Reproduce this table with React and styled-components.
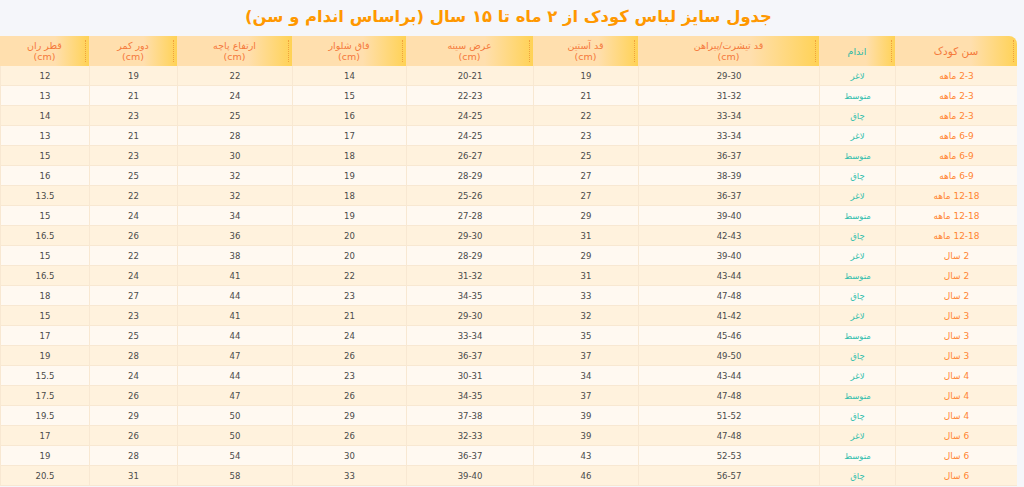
import React from 'react';
import styled, { createGlobalStyle } from 'styled-components';

const GlobalStyle = createGlobalStyle`
  html, body {
    margin: 0;
    padding: 0;
    background: #f5f6fa;
    font-family: "DejaVu Sans", "Noto Sans", sans-serif;
  }
`;

const Page = styled.div`
  direction: rtl;
  padding-right: 7px;
  overflow: hidden;
`;

const Title = styled.h1`
  margin: 0;
  height: 36px;
  line-height: 34px;
  text-align: center;
  font-size: 16.4px;
  font-weight: bold;
  color: #ff9800;
`;

const Table = styled.table`
  width: 100%;
  border-collapse: separate;
  border-spacing: 0;
  table-layout: fixed;
  border-top-right-radius: 8px;
  overflow: hidden;
`;

const Th = styled.th`
  position: relative;
  height: 30px;
  padding: 0 4px;
  font-size: 9.5px;
  font-weight: normal;
  line-height: 11px;
  color: ${(p) => (p.$teal ? '#2bb8a6' : '#f5793b')};
  background: linear-gradient(to right, #ffdfae 0%, #ffdfae 62%, #ffd255 100%);

  &::after {
    content: '';
    position: absolute;
    right: 3px;
    top: 4px;
    bottom: 4px;
    border-right: 1px dotted #f0a23c;
  }

  ${(p) => p.$big && 'font-size: 10.5px;'}
`;

const Row = styled.tr`
  background: ${(p) => (p.$odd ? '#fff2dd' : '#fff9f1')};
`;

const Td = styled.td`
  height: 19px;
  padding: 0;
  text-align: center;
  font-size: 8.5px;
  color: ${(p) => p.$color || '#4a4a4a'};
  border-bottom: 1px solid #f8e8d2;
  border-left: 1px solid #f8e8d2;
  white-space: nowrap;
  ${(p) => p.$big && 'font-size: 9px;'}
`;

const columns = [
  { title: 'سن کودک', width: 122, big: true },
  { title: 'اندام', width: 76, teal: true },
  { title: 'قد تیشرت/پیراهن', width: 181 },
  { title: 'قد آستین', width: 105 },
  { title: 'عرض سینه', width: 127 },
  { title: 'فاق شلوار', width: 114 },
  { title: 'ارتفاع پاچه', width: 115 },
  { title: 'دور کمر', width: 88 },
  { title: 'قطر ران', width: 89 },
];

const rows = [
  ['2-3 ماهه', 'لاغر', '29-30', '19', '20-21', '14', '22', '19', '12'],
  ['2-3 ماهه', 'متوسط', '31-32', '21', '22-23', '15', '24', '21', '13'],
  ['2-3 ماهه', 'چاق', '33-34', '22', '24-25', '16', '25', '23', '14'],
  ['6-9 ماهه', 'لاغر', '33-34', '23', '24-25', '17', '28', '21', '13'],
  ['6-9 ماهه', 'متوسط', '36-37', '25', '26-27', '18', '30', '23', '15'],
  ['6-9 ماهه', 'چاق', '38-39', '27', '28-29', '19', '32', '25', '16'],
  ['12-18 ماهه', 'لاغر', '36-37', '27', '25-26', '18', '32', '22', '13.5'],
  ['12-18 ماهه', 'متوسط', '39-40', '29', '27-28', '19', '34', '24', '15'],
  ['12-18 ماهه', 'چاق', '42-43', '31', '29-30', '20', '36', '26', '16.5'],
  ['2 سال', 'لاغر', '39-40', '29', '28-29', '20', '38', '22', '15'],
  ['2 سال', 'متوسط', '43-44', '31', '31-32', '22', '41', '24', '16.5'],
  ['2 سال', 'چاق', '47-48', '33', '34-35', '23', '44', '27', '18'],
  ['3 سال', 'لاغر', '41-42', '32', '29-30', '21', '41', '23', '15'],
  ['3 سال', 'متوسط', '45-46', '35', '33-34', '24', '44', '25', '17'],
  ['3 سال', 'چاق', '49-50', '37', '36-37', '26', '47', '28', '19'],
  ['4 سال', 'لاغر', '43-44', '34', '30-31', '23', '44', '24', '15.5'],
  ['4 سال', 'متوسط', '47-48', '37', '34-35', '26', '47', '26', '17.5'],
  ['4 سال', 'چاق', '51-52', '39', '37-38', '29', '50', '29', '19.5'],
  ['6 سال', 'لاغر', '47-48', '39', '32-33', '26', '50', '26', '17'],
  ['6 سال', 'متوسط', '52-53', '43', '36-37', '30', '54', '28', '19'],
  ['6 سال', 'چاق', '56-57', '46', '39-40', '33', '58', '31', '20.5'],
];

const cellColor = (i) => {
  if (i === 0) return '#ff8533';
  if (i === 1) return '#33bfae';
  return undefined;
};

export default function App() {
  return (
    <>
      <GlobalStyle />
      <Page>
        <Title>جدول سایز لباس کودک از ۲ ماه تا ۱۵ سال (براساس اندام و سن)</Title>
        <Table>
          <colgroup>
            {columns.map((c) => (
              <col key={c.title} style={{ width: c.width }} />
            ))}
          </colgroup>
          <thead>
            <tr>
              {columns.map((c, i) => (
                <Th key={c.title} $teal={c.teal} $big={c.big}>
                  {c.title}
                  {i > 1 && (
                    <>
                      <br />
                      (cm)
                    </>
                  )}
                </Th>
              ))}
            </tr>
          </thead>
          <tbody>
            {rows.map((r, ri) => (
              <Row key={ri} $odd={ri % 2 === 0}>
                {r.map((v, i) => (
                  <Td key={i} $color={cellColor(i)} $big={i === 0}>
                    {v}
                  </Td>
                ))}
              </Row>
            ))}
          </tbody>
        </Table>
      </Page>
    </>
  );
}
